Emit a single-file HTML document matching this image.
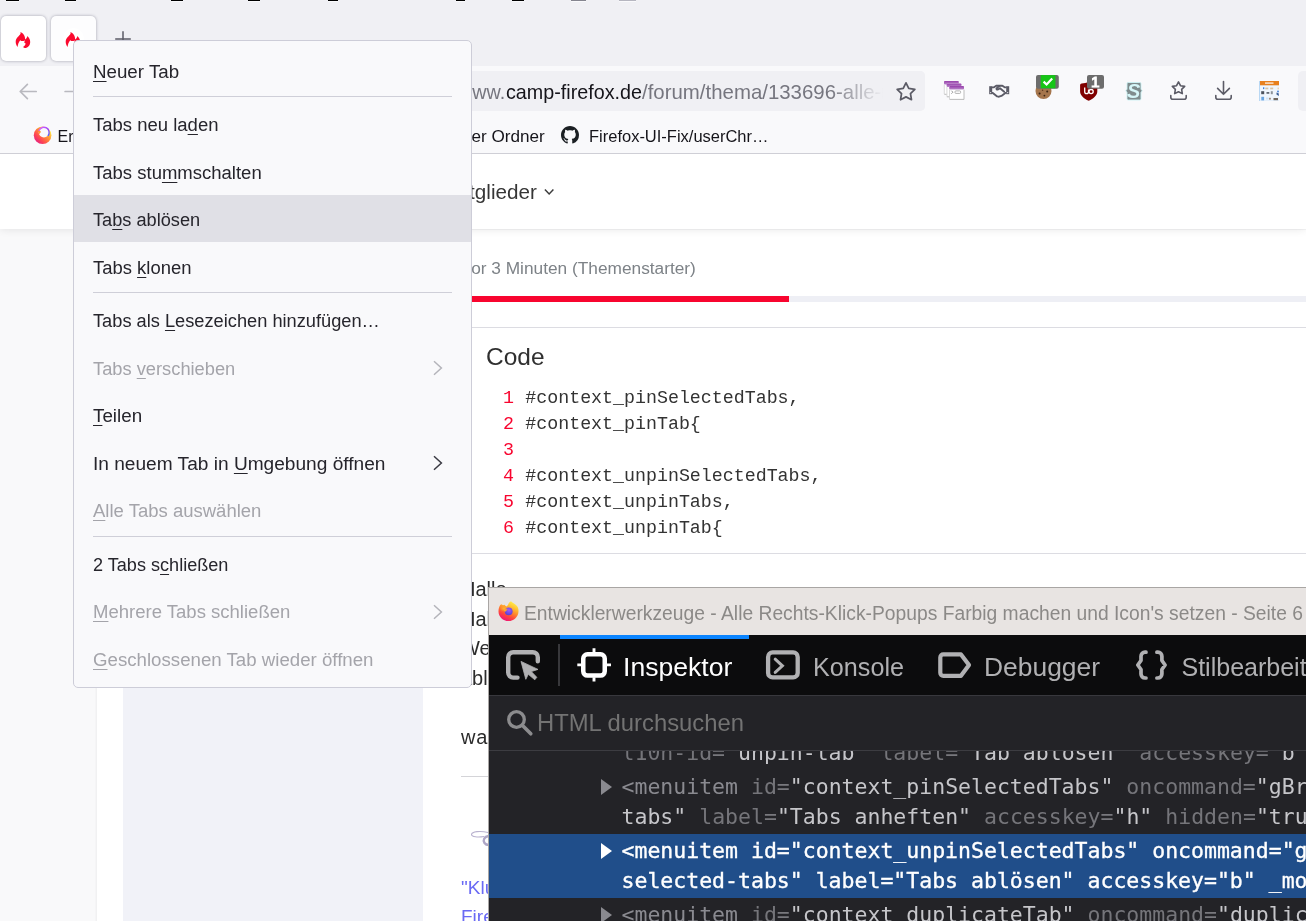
<!DOCTYPE html>
<html lang="de">
<head>
<meta charset="utf-8">
<title>Alle Rechts-Klick-Popups Farbig machen und Icon's setzen - Seite 6</title>
<style>
*{box-sizing:border-box;margin:0;padding:0}
html,body{width:1306px;height:921px;overflow:hidden;background:#f9f9fa}
body{position:relative;font-family:"Liberation Sans",sans-serif;color:#15141a}
.abs,.t,i.dash{position:absolute}
.t{line-height:0;white-space:nowrap;display:block;transform-origin:0 50%}
.ui{font-family:"Liberation Sans",sans-serif;margin-top:-.3465em}
.dv{font-family:"DejaVu Sans","Liberation Sans",sans-serif;margin-top:-.346em}
.mono{font-family:"Liberation Mono",monospace;margin-top:-.2665em}
.dm{font-family:"DejaVu Sans Mono","Liberation Mono",monospace;margin-top:-.346em}
u{text-decoration:underline;text-decoration-thickness:1px;text-underline-offset:2.600px}
svg{display:block;overflow:visible}

/* ---------- browser chrome ---------- */
#chrome{position:absolute;left:0;top:0;width:1306px;height:154px;background:#f9f9fb;border-bottom:1px solid #cfcfd6}
#tabbar{position:absolute;left:0;top:0;width:1306px;height:66px;background:#f0f0f4}
i.dash{top:0;height:2px;border-bottom:1px solid #fafafc}
.tab{position:absolute;top:16px;width:45px;height:45px;border-radius:5px;background:#fff;box-shadow:0 0 3px rgba(50,50,75,.42)}
.tab.sel{background:#fdfdfe}
.tab.sel i{position:absolute;left:12px;top:12px;width:21px;height:21px;border-radius:50%;background:#fff}
#urlbar{position:absolute;left:300px;top:71px;width:625px;height:40px;border-radius:5px;background:#f0f0f4;overflow:hidden}
#urlfade{position:absolute;left:530px;top:0;width:95px;height:40px;background:linear-gradient(90deg,rgba(240,240,244,0),#f0f0f4 56%)}
#searchbar{position:absolute;left:1298px;top:71px;width:30px;height:40px;border-radius:5px;background:#f0f0f4}

/* ---------- page ---------- */
#page{position:absolute;left:0;top:154px;width:1306px;height:767px;background:#f9f9fa;overflow:hidden}
#pagehead{position:absolute;left:0;top:0;width:1306px;height:75px;background:#fff;box-shadow:0 1px 8px rgba(0,0,0,.085)}
#content{position:absolute;left:97px;top:76px;width:1300px;height:800px;background:#fff;box-shadow:-1px 0 2px rgba(0,0,0,.05)}
#sidebar{position:absolute;left:26px;top:40px;width:300px;height:700px;background:#f1f2f8}

#codebox{position:absolute;left:465px;top:173px;width:900px;height:227px;border:1px solid #dcdce2;background:#fff}
#code{list-style:none;position:absolute;left:8px;top:57.200px;font-family:"Liberation Mono",monospace;font-size:18.290px;line-height:26.050px;color:#333}
#code li{white-space:pre;height:26.050px;padding-left:51.300px;position:relative}
#code li span{position:absolute;left:29px;color:#f8052f}
#post{position:absolute;left:461px;top:420.800px;font-family:"Liberation Sans",sans-serif;font-size:20px;line-height:29.700px;color:#2c2c2c;white-space:nowrap}
/* ---------- devtools ---------- */
#devtools{position:absolute;left:488px;top:587px;width:900px;height:400px;background:#232327;border-left:1px solid #a9a6a4;border-top:1px solid #a9a6a4;overflow:hidden}

#dt-title{position:absolute;left:0;top:0;width:900px;height:47px;background:#e8e4e2}
#dt-tabs{position:absolute;left:0;top:47px;width:900px;height:61px;background:#0c0c0d;border-bottom:1px solid #38383d}
#dt-active{position:absolute;left:71px;top:0;width:189px;height:4px;background:#0a84ff}
#dt-sep{position:absolute;left:69.200px;top:9px;width:2px;height:42px;background:#38383b}
#dt-search{z-index:1;position:absolute;left:0;top:108px;width:900px;height:55px;background:#232327;border-bottom:1px solid #3c3c41}
#dt-markup{position:absolute;left:0;top:162px;width:900px;height:300px;background:#232327;overflow:hidden;font-family:"DejaVu Sans Mono","Liberation Mono",monospace;font-size:21.500px;color:#78787d}
.row{position:absolute;left:0;width:900px;height:64px;padding-top:2px}
.row .ln{display:block;height:30px;line-height:30px;white-space:pre;padding-left:132.500px}
.tg{color:#8a8a90}.an{color:#75757a}.av{color:#c6c6ca}
.selrow{background:#204e8a;color:#fff;-webkit-text-stroke:.35px #fff;height:63.500px}
.tw{position:absolute;left:112px;top:9px;border-left:11.500px solid #8a8a90;border-top:8.500px solid transparent;border-bottom:8.500px solid transparent}
.selrow .tw{border-left-color:#fff}
/* ---------- context menu ---------- */
#menu{position:absolute;left:73px;top:40px;width:399px;height:648px;background:#f9f9fb;border:1px solid #cdcdd8;border-radius:5px;overflow:hidden}
.mi{font-size:18px;color:#26252c}
.mi.dis{color:#a4a4aa}
.msep{position:absolute;left:19px;width:359px;height:1px;background:#cfcfd8}
.mhl{position:absolute;left:0;width:397px;height:47px;background:#e0e0e6}
#chrome,#page,#devtools,#menu{will-change:transform}
</style>
</head>
<body>
<div id="chrome">
 <div id="tabbar">
  <i class="dash" style="left:6px;width:13px;background:#000"></i><i class="dash" style="left:65px;width:11px;background:#000"></i><i class="dash" style="left:171px;width:12px;background:#000"></i><i class="dash" style="left:248px;width:12px;background:#000"></i><i class="dash" style="left:328px;width:10px;background:#000"></i><i class="dash" style="left:456px;width:9px;background:#000"></i><i class="dash" style="left:512px;width:12px;background:#000"></i><i class="dash" style="left:571px;width:15px;background:#85858f"></i><i class="dash" style="left:619px;width:17px;background:#b6b6c0"></i>
  <div class="tab" style="left:1px"></div>
  <div class="tab sel" style="left:51px"><i></i></div>
  <svg class="abs" style="left:8px;top:24px" width="32" height="32" viewBox="0 0 32 32"><path d="M12.3 8C14 8.3 17 11 17.1 14.6L17.2 15.6C18.5 14.5 19.3 13.5 19.3 12.1C21 13.5 22.3 15.8 22.2 18C22.1 21.5 19.8 24 17 24C16.2 24 15.6 23.6 15.1 23C16.2 22.3 17.6 21 17.6 19.6L16.2 18.4C16.6 17.6 16.8 16.8 16.6 16.2C15.5 17.4 13.4 17.4 12.2 16.2C10.8 17.8 9.8 20.5 9.6 23C8.3 21.5 7.6 19.5 7.7 17.6C7.8 14 11.5 12 12.6 9.6C12.8 9 12.6 8.4 12.3 8Z" fill="#fb0a2f"/></svg>
  <svg class="abs" style="left:58px;top:24px" width="32" height="32" viewBox="0 0 32 32"><path d="M12.3 8C14 8.3 17 11 17.1 14.6L17.2 15.6C18.5 14.5 19.3 13.5 19.3 12.1C21 13.5 22.3 15.8 22.2 18C22.1 21.5 19.8 24 17 24C16.2 24 15.6 23.6 15.1 23C16.2 22.3 17.6 21 17.6 19.6L16.2 18.4C16.6 17.6 16.8 16.8 16.6 16.2C15.5 17.4 13.4 17.4 12.2 16.2C10.8 17.8 9.8 20.5 9.6 23C8.3 21.5 7.6 19.5 7.7 17.6C7.8 14 11.5 12 12.6 9.6C12.8 9 12.6 8.4 12.3 8Z" fill="#fb0a2f"/></svg>
  <svg class="abs" style="left:114px;top:30px" width="18" height="18" viewBox="0 0 18 18"><path d="M9 1.2V16.8M1.2 9H16.8" stroke="#5b5b66" stroke-width="1.5" fill="none"/></svg>
 </div>
 <div id="navbar">
  <svg class="abs" style="left:17px;top:80px" width="22" height="22" viewBox="0 0 22 22"><path d="M19.200 11.500H3.300M10.400 4.400L3.200 11.500L10.400 18.600" stroke="#b9b9bf" stroke-width="1.7" fill="none" stroke-linejoin="round" stroke-linecap="round"/></svg>
  <svg class="abs" style="left:62px;top:80px" width="22" height="22" viewBox="0 0 22 22"><path d="M3.100 11.500H19M11.800 4.400L19 11.500L11.800 18.600" stroke="#b9b9bf" stroke-width="1.7" fill="none" stroke-linejoin="round" stroke-linecap="round"/></svg>
  <div id="urlbar">
   <span id="u1" class="t ui" style="right:419.5px;top:28.500px;font-size:21px;color:#76767f;transform-origin:100% 50%;transform:scaleX(.94)">www.</span>
   <span id="u2" class="t ui" style="left:205.5px;top:28.500px;font-size:21px;color:#15141a;transform:scaleX(0.9397)">camp-firefox.de</span>
   <span id="u3" class="t ui" style="left:341.6px;top:28.500px;font-size:21px;color:#76767f;transform:scaleX(0.9719)">/forum/thema/133696-alle-</span>
   <span id="u4" class="t ui" style="left:581px;top:28.500px;font-size:21px;color:#76767f;transform:scaleX(.92)">rechts-klick-popups</span>
   <div id="urlfade"></div>
   <svg class="abs" style="left:594px;top:9px" width="24" height="24" viewBox="0 0 24 24"><path d="M12.00 2.90L14.76 8.40L20.84 9.33L16.47 13.65L17.47 19.72L12.00 16.90L6.53 19.72L7.53 13.65L3.16 9.33L9.24 8.40Z" fill="none" stroke="#5b5b66" stroke-width="1.75" stroke-linejoin="round"/></svg>
  </div>
  <div id="searchbar"></div>
  <div id="tbicons">
   <svg class="abs" style="left:943px;top:80px" width="22" height="20" viewBox="0 0 22 20">
    <defs><linearGradient id="pg" x1="0" y1="0" x2="0" y2="1"><stop offset="0" stop-color="#983fab"/><stop offset="1" stop-color="#b98acb"/></linearGradient></defs>
    <g><rect x="1" y="1" width="14.8" height="13" rx=".8" fill="#fff"/><path d="M1.3 14.3H15.8V4.6" stroke="#b4b4b4" stroke-width=".9" fill="none"/><path d="M1.3 4.6V14" stroke="#c9c9c9" stroke-width=".7"/><rect x="1" y="1" width="14.8" height="3.5" rx=".8" fill="url(#pg)"/></g>
    <g transform="translate(2.6 2.5)"><rect x="1" y="1" width="14.8" height="13" rx=".8" fill="#fff"/><path d="M1.3 14.3H15.8V4.6" stroke="#b4b4b4" stroke-width=".9" fill="none"/><path d="M1.3 4.6V14" stroke="#c9c9c9" stroke-width=".7"/><rect x="1" y="1" width="14.8" height="3.5" rx=".8" fill="url(#pg)"/></g><g transform="translate(5.2 5.1)"><rect x="1" y="1" width="14.8" height="13" rx=".8" fill="#fff"/><path d="M1.3 14.3H15.8V4.6" stroke="#b4b4b4" stroke-width=".9" fill="none"/><path d="M1.3 4.6V14" stroke="#c9c9c9" stroke-width=".7"/><rect x="1" y="1" width="14.8" height="3.5" rx=".8" fill="url(#pg)"/></g>
    <path d="M8.4 10.7l1.5 1.5-1.5 1.5" stroke="#9a9a9a" stroke-width="1" fill="none"/><rect x="12" y="10.9" width="5.6" height="2.5" rx=".9" fill="none" stroke="#aaa" stroke-width=".9"/>
   </svg>
   <svg class="abs" style="left:989px;top:84px" width="21" height="14" viewBox="0 0 21 14">
    <rect x=".2" y="2.200" width="3" height="8" fill="#5b5b66"/><rect x="17.200" y="2.200" width="3" height="8" fill="#5b5b66"/><circle cx="1.700" cy="8.600" r=".6" fill="#f9f9fb"/><circle cx="18.700" cy="8.600" r=".6" fill="#f9f9fb"/>
    <path d="M2.8 3.4L5 3.2 7.2 1.7H13.4L15.6 3.2 17.6 3.4M2.8 8.9H3.8L8.2 12.4 10 12.7 12.4 11.9 16.4 8.9H17.6" stroke="#5b5b66" stroke-width="1.900" fill="none" stroke-linejoin="round"/>
    <path d="M10.6 1.9L7.6 4.2C7 4.9 7.8 6 9 5.5L11 4.2 15.2 7.8" stroke="#5b5b66" stroke-width="1.800" fill="none" stroke-linejoin="round" stroke-linecap="round"/>
   </svg>
   <!-- cookie + badge -->
   <svg class="abs" style="left:1034px;top:74px" width="26" height="26" viewBox="0 0 26 26">
    <circle cx="9.5" cy="17" r="8" fill="#a5754c"/><circle cx="5.6" cy="19.6" r="1" fill="#3a2414"/><circle cx="10.4" cy="21.6" r=".9" fill="#3a2414"/><circle cx="13.2" cy="17.6" r="1" fill="#3a2414"/><circle cx="8.6" cy="16.2" r=".7" fill="#5c3a20"/>
    <rect x="2" y="1.1" width="22.8" height="13.7" rx="2" fill="#6d6d6d"/><rect x="6.7" y="1.1" width="14.7" height="13.2" fill="#16c516"/>
    <path d="M9.6 7.6l3 2.9 5.6-6" stroke="#fff" stroke-width="2.2" fill="none"/>
   </svg>
   <!-- uBlock + badge -->
   <svg class="abs" style="left:1079px;top:74px" width="26" height="28" viewBox="0 0 26 28">
    <path d="M2.600 9.400C5 9.400 7.600 9 9.700 8.100 11.800 9 14.400 9.400 16.800 9.400Q18.300 9.400 18.300 10.900V17.500C18.300 21.500 14.500 24.600 9.700 26.800 4.900 24.600 1.100 21.500 1.100 17.500V10.900Q1.100 9.400 2.600 9.400Z" fill="#800000"/>
    <path d="M5.700 13.600V17.700a1.900 1.900 0 0 0 3.800 0V15.600" stroke="#fff" stroke-width="1.300" fill="none"/><circle cx="12.100" cy="17.600" r="2.100" stroke="#fff" stroke-width="1.300" fill="none"/>
    <rect x="8" y="1.100" width="17" height="13.700" rx="2" fill="#6d6d6d"/>
   </svg>
   <span id="ub1" class="t ui" style="left:1091px;top:87.400px;font-size:15.500px;color:#fff;-webkit-text-stroke:1px #fff">1</span>
   <!-- Stylus -->
   <svg class="abs" style="left:1125px;top:81px" width="18" height="20" viewBox="0 0 18 20">
    <path d="M3.200 1.500H14.800Q16 1.500 16 2.700V8.200L17.200 9.800 16 11.400V17.800Q16 19 14.800 19H3.200Q2 19 2 17.800V11.400L.8 9.800 2 8.200V2.700Q2 1.500 3.200 1.500Z" fill="#7f8c8d" stroke="#cdf3f5" stroke-width=".9"/>
   </svg>
   <span id="sty" class="t ui" style="left:1127.400px;top:97.800px;font-size:19.500px;font-weight:bold;font-style:italic;color:#d6f6f8;transform:scaleX(1.02)">S</span>
   <!-- bookmarks menu -->
   <svg class="abs" style="left:1168px;top:79px" width="22" height="22" viewBox="0 0 22 22"><path d="M10.50 2.90L12.44 6.73L16.68 7.39L13.64 10.42L14.32 14.66L10.50 12.70L6.68 14.66L7.36 10.42L4.32 7.39L8.56 6.73Z" fill="none" stroke="#5b5b66" stroke-width="1.600" stroke-linejoin="round"/><path d="M2.800 16.500v1.700a2 2 0 0 0 2 2h11.400a2 2 0 0 0 2-2v-1.700" fill="none" stroke="#5b5b66" stroke-width="1.600" stroke-linecap="round"/></svg>
   <!-- downloads -->
   <svg class="abs" style="left:1213px;top:79px" width="22" height="22" viewBox="0 0 22 22"><path d="M10.500 2.600V15.200M4.600 9.400L10.500 15.300 16.400 9.400" fill="none" stroke="#5b5b66" stroke-width="1.600" stroke-linecap="round" stroke-linejoin="round"/><path d="M2.800 16.500v1.700a2 2 0 0 0 2 2h11.400a2 2 0 0 0 2-2v-1.700" fill="none" stroke="#5b5b66" stroke-width="1.600" stroke-linecap="round"/></svg>
   <!-- calendar -->
   <svg class="abs" style="left:1259px;top:81px" width="20" height="20" viewBox="0 0 20 20">
    <rect x="0" y="0" width="20" height="20" fill="#dcecfb"/><rect x="1.200" y="4.200" width="18.800" height="15.200" fill="#eff6fd"/><rect x="1" y="0" width="19" height="4.300" fill="#e8801c"/><rect x="6" y="1.300" width="8.500" height="1.600" fill="#f9dcc0"/><rect x="0" y="0" width="1" height="20" fill="#b9d8f4"/>
    <g fill="#d9c3a4"><rect x="6.300" y="6.600" width="3" height="1.700"/><rect x="11.200" y="6.600" width="3" height="1.700"/><rect x="18.500" y="6.600" width="1.500" height="1.700" fill="#ecd3b4"/></g>
    <g fill="#4a515c"><rect x="2.200" y="10.200" width="3" height="3"/><rect x="7.500" y="11" width="2.800" height="1.800" fill="#636a74"/><rect x="11.800" y="10.200" width="2" height="3" fill="#8d949c"/><rect x="14.500" y="17" width="4.500" height="2.200" fill="#6f675e"/></g>
    <g fill="#3f7fd8"><rect x="4" y="6.300" width="1.300" height="1.800"/><circle cx="19" cy="10.500" r=".9"/><path d="M17.500 11.500L19.800 12.500V15L17.500 13.500Z" fill="#3c5f96"/><rect x="2.300" y="15.800" width="2.800" height="3.600" fill="#6aa6e2"/></g>
    <rect x="7" y="16.500" width="2.500" height="2" fill="#cfe4f8"/><rect x="10.200" y="16.800" width="1.500" height="1.800" fill="#8a7460"/>
   </svg>
  </div>
 </div>
 <div id="bookmarks">
  <svg class="abs" style="left:32.500px;top:125.200px" width="19" height="19" viewBox="0 0 19 19">
   <defs><linearGradient id="fxg" x1=".9" y1=".25" x2=".2" y2=".95"><stop offset="0" stop-color="#ffe850"/><stop offset=".3" stop-color="#ff9d30"/><stop offset=".7" stop-color="#ff4a50"/><stop offset="1" stop-color="#e62080"/></linearGradient>
   <linearGradient id="fxp" x1="0" y1="0" x2="1" y2="1"><stop offset="0" stop-color="#e070ff"/><stop offset=".55" stop-color="#9a3dff"/><stop offset="1" stop-color="#4f6bff"/></linearGradient></defs>
   <circle cx="9.600" cy="10.300" r="8.800" fill="url(#fxg)"/>
   <circle cx="10.9" cy="7.5" r="5.1" fill="#f9f9fb"/>
   <path d="M6.300 5.200C7.200 5.600 7.800 6.300 8 7.200 7.200 7.600 6.600 8.400 6.500 9.400 5.600 8.200 5.500 6.400 6.300 5.200Z" fill="#ff9a30"/>
   <path d="M6.14 5.28A5.25 5.25 0 1 1 15.20 10.51" fill="none" stroke="url(#fxp)" stroke-width="1.350" stroke-linecap="round"/>
  </svg>
  <svg class="abs" style="left:561px;top:126px" width="18" height="18" viewBox="0 0 16 16"><path fill="#1b1f23" d="M8 0C3.580 0 0 3.580 0 8c0 3.540 2.290 6.530 5.470 7.590.4.070.55-.17.550-.38 0-.19-.01-.82-.01-1.490-2.010.37-2.530-.49-2.690-.94-.09-.23-.48-.94-.82-1.130-.28-.15-.68-.52-.01-.53.630-.01 1.080.58 1.230.82.720 1.210 1.870.87 2.330.66.070-.52.280-.87.510-1.070-1.780-.2-3.640-.89-3.640-3.950 0-.87.310-1.590.82-2.150-.08-.2-.36-1.020.08-2.120 0 0 .67-.21 2.200.82.640-.18 1.320-.27 2-.27s1.360.09 2 .27c1.530-1.040 2.200-.82 2.200-.82.440 1.100.16 1.920.08 2.120.51.560.82 1.270.82 2.150 0 3.070-1.870 3.750-3.650 3.950.29.250.54.730.54 1.480 0 1.070-.01 1.930-.01 2.200 0 .21.150.46.550.38A8.013 8.013 0 0 0 16 8c0-4.420-3.580-8-8-8z"/></svg>
  <span id="b1" class="t ui" style="left:57.5px;top:142.800px;font-size:16px">Erste Schritte</span>
  <span id="b2" class="t ui" style="right:760.800px;top:142.800px;font-size:16px;transform-origin:100% 50%;transform:scaleX(1.07)">Neuer Ordner</span>
  <span id="b3" class="t ui" style="left:588.5px;top:142.800px;font-size:16px;transform:scaleX(1.0302)">Firefox-UI-Fix/userChr…</span>
 </div>
</div>
<div id="page">
 <div id="content">
  <div id="sidebar"></div>
 </div>
 <div id="pagehead">
  <span id="p1" class="t ui" style="right:769px;top:45px;font-size:20.500px;color:#363636;transform-origin:100% 50%;transform:scaleX(1.008)">Mitglieder</span>
  <svg class="abs" style="left:543px;top:33px" width="12" height="10" viewBox="0 0 12 10"><path d="M1.900 2.600L6.150 7 10.400 2.600" fill="none" stroke="#3c3c3c" stroke-width="1.500"/></svg>
 </div>
 <span id="p2" class="t ui" style="right:610.500px;top:120.500px;font-size:16px;color:#7d8287;transform-origin:100% 50%;transform:scaleX(1.08)">Vor 3 Minuten (Themenstarter)</span>
 <div id="barred" class="abs" style="left:440px;top:142px;width:349px;height:6px;background:#f8052f"></div>
 <div id="bargray" class="abs" style="left:789px;top:142px;width:517px;height:6px;background:#eeeff5"></div>
 <div id="codebox">
  <span id="p3" class="t ui" style="left:20px;top:37.700px;font-size:24px;color:#2f2f2f;transform:scaleX(1.02)">Code</span>
  <ol id="code">
   <li><span>1</span>#context_pinSelectedTabs,</li>
   <li><span>2</span>#context_pinTab{</li>
   <li><span>3</span></li>
   <li><span>4</span>#context_unpinSelectedTabs,</li>
   <li><span>5</span>#context_unpinTabs,</li>
   <li><span>6</span>#context_unpinTab{</li>
  </ol>
 </div>
 <div id="post">
  <p>Hallo,</p><p>Hallo zusammen,</p><p>Wenn ich mehrere Tabs markiere, dann</p><p>ablösen funktioniert nicht</p><p>&nbsp;</p><p style="letter-spacing:.9px">was mache ich falsch?</p>
 </div>
 <div id="sigline" class="abs" style="left:461px;top:622px;width:800px;height:1px;background:#d4d4d8"></div>
 <svg class="abs" style="left:470px;top:676px" width="40" height="18" viewBox="0 0 40 18"><path d="M18 2.500C10 .5 2 1.500 1.500 4.500 1.500 7 8 7.500 14 6.500" fill="none" stroke="#b9b2cf" stroke-width="1.100" stroke-linecap="round"/><path d="M18.500 6C14.500 6.500 12.500 10 14.500 13 15.500 14.500 17 15 19 15" fill="none" stroke="#aea6c6" stroke-width="2.300" stroke-linecap="round"/></svg>
 <span id="p4" class="t ui" style="left:461px;top:740.300px;font-size:19px;color:#6a6af4">"Klug ist, wer nur die Hälfte von dem glaubt, was er hört</span>
 <span id="p5" class="t ui" style="left:461px;top:769.800px;font-size:19px;color:#6a6af4">Firefox 91 • Windows 10</span>
</div>
<div id="devtools">
 <div id="dt-title">
  <svg class="abs" style="left:8.500px;top:13px" width="21" height="21" viewBox="0 0 21 21">
   <defs><linearGradient id="ffo" x1=".78" y1=".05" x2=".3" y2="1"><stop offset="0" stop-color="#fff24e"/><stop offset=".25" stop-color="#ffc233"/><stop offset=".48" stop-color="#ff8a2c"/><stop offset=".72" stop-color="#ff453d"/><stop offset="1" stop-color="#ee0f7c"/></linearGradient>
   <radialGradient id="ffg" cx=".55" cy=".35" r=".7"><stop offset="0" stop-color="#a259ff"/><stop offset="1" stop-color="#4f3fd0"/></radialGradient>
   <radialGradient id="ffh" cx=".5" cy=".5" r=".5"><stop offset="0" stop-color="#ffb830"/><stop offset="1" stop-color="#ffa02c" stop-opacity="0"/></radialGradient></defs>
   <path d="M13 .2C14.500 2 17.500 3 19 5 20.300 6.800 20.600 8.600 20.500 10.400 20.300 15.600 16 20 10.500 20 5 20 .5 15.600 .5 10.400 .5 8 1 5.800 2.200 4L3.500 3.200 5 4.200 6.500 3.800C7 4.600 7.800 5.200 8.600 5.400 9.600 4.600 10.400 3.600 10.600 2.600 11 1.600 11.800 .8 13 .2Z" fill="url(#ffo)"/>
   <circle cx="10.700" cy="10.300" r="3.900" fill="url(#ffg)"/>
   <ellipse cx="6" cy="7.600" rx="4.200" ry="3.200" fill="url(#ffh)"/>
   <path d="M5.500 8.800C6.800 8.200 8.200 8.200 9.600 8.800 8.600 9.300 7.600 10 7.200 11 6.400 10.400 5.800 9.600 5.500 8.800Z" fill="#ffa62e"/>
  </svg>
  <span id="d0" class="t ui" style="left:35px;top:32.300px;font-size:20px;color:#8b8987;transform:scaleX(0.9633)">Entwicklerwerkzeuge - Alle Rechts-Klick-Popups Farbig machen und Icon's setzen - Seite 6</span>
 </div>
 <div id="dt-tabs">
  <i id="dt-active"></i><i id="dt-sep"></i>
  <!-- element picker -->
  <svg class="abs" style="left:16px;top:14px" width="38" height="34" viewBox="0 0 38 34"><path d="M32.800 12.200V8.200a5 5 0 0 0-5-5H8.200a5 5 0 0 0-5 5V23.600a5 5 0 0 0 5 5H12.500" fill="none" stroke="#b1b1b3" stroke-width="4.400" stroke-linecap="round"/><path d="M16 12.400L33 20.400 26.300 22.600 31.800 28.300 29.800 30.800 23.300 25.300 20.800 30.300Z" fill="#b1b1b3" stroke="#b1b1b3" stroke-width=".8" stroke-linejoin="round"/></svg>
  <!-- inspector -->
  <svg class="abs" style="left:88px;top:13px" width="35" height="34" viewBox="0 0 35 34"><rect x="6.250" y="6.250" width="21.500" height="21.300" rx="4.200" fill="none" stroke="#fff" stroke-width="4.500"/><path d="M17 .2V4.500M17 29.300V33.600M.3 16.900H4.500M29.500 16.900H34" stroke="#fff" stroke-width="2.900"/></svg>
  <span id="d1" class="t ui" style="left:134.300px;top:41px;font-size:25px;color:#fff;transform:scaleX(1.0628)">Inspektor</span>
  <!-- console -->
  <svg class="abs" style="left:277px;top:15px" width="36" height="30" viewBox="0 0 36 30"><rect x="2.100" y="2.400" width="29.600" height="25" rx="4.500" fill="none" stroke="#b1b1b3" stroke-width="4.300"/><path d="M9.200 9.200L16.400 15.800 9.200 22.400" fill="none" stroke="#b1b1b3" stroke-width="3" stroke-linecap="round"/></svg>
  <span id="d2" class="t ui" style="left:324px;top:41px;font-size:25px;color:#b1b1b3;transform:scaleX(1.0071)">Konsole</span>
  <!-- debugger -->
  <svg class="abs" style="left:449px;top:16px" width="36" height="28" viewBox="0 0 36 28"><path d="M5.300 3.400H23L31 14.100 23 24.800H5.300a3 3 0 0 1-3-3V6.400a3 3 0 0 1 3-3Z" fill="none" stroke="#b1b1b3" stroke-width="4.200" stroke-linejoin="round"/></svg>
  <span id="d3" class="t ui" style="left:494.800px;top:41px;font-size:25px;color:#b1b1b3;transform:scaleX(1.0563)">Debugger</span>
  <!-- style editor -->
  <svg class="abs" style="left:645px;top:13px" width="36" height="34" viewBox="0 0 36 34"><path d="M12 4.200H11a4 4 0 0 0-4 4V12.500L3.800 17 7 21.500V26a4 4 0 0 0 4 4H12M22.900 4.200H23.900a4 4 0 0 1 4 4V12.500L31.100 17 27.900 21.500V26a4 4 0 0 1-4 4H22.900" fill="none" stroke="#b1b1b3" stroke-width="3.700" stroke-linecap="round" stroke-linejoin="round"/></svg>
  <span id="d4" class="t ui" style="left:692.500px;top:41px;font-size:25px;color:#b1b1b3;transform:scaleX(1.0)">Stilbearbeitung</span>
 </div>
 <div id="dt-search">
  <svg class="abs" style="left:15.500px;top:12px" width="30" height="30" viewBox="0 0 30 30"><circle cx="11.500" cy="11.500" r="7.800" fill="none" stroke="#8c8c8e" stroke-width="3.300"/><path d="M17.300 17.300L25.800 25.800" stroke="#8c8c8e" stroke-width="3.600" stroke-linecap="round"/></svg>
  <span id="d5" class="t ui" style="left:48.200px;top:35.800px;font-size:24.500px;color:#737373;transform:scaleX(0.9723)">HTML durchsuchen</span>
 </div>
 <div id="dt-markup">
  <div class="row" style="top:-44px"><span class="ln">&nbsp;</span><span class="ln"><span class="an">l10n-id</span>=<span class="av">"unpin-tab"</span> <span class="an">label</span>=<span class="av">"Tab ablösen"</span> <span class="an">accesskey</span>=<span class="av">"b"</span> <span class="an">hidden</span>=<span class="av">"true"</span></span></div>
  <div class="row" style="top:20px"><i class="tw"></i><span class="ln"><span class="tg">&lt;menuitem</span> <span class="an">id</span>=<span class="av">"context_pinSelectedTabs"</span> <span class="an">oncommand</span>=<span class="av">"gBrowser.pinMultiSelectedTabs();"</span></span><span class="ln"><span class="av">tabs"</span> <span class="an">label</span>=<span class="av">"Tabs anheften"</span> <span class="an">accesskey</span>=<span class="av">"h"</span> <span class="an">hidden</span>=<span class="av">"true"</span><span class="tg">&gt;</span></span></div>
  <div class="row selrow" style="top:84px"><i class="tw"></i><span class="ln">&lt;menuitem id="context_unpinSelectedTabs" oncommand="gBrowser.unpinMultiSelectedTabs();"</span><span class="ln">selected-tabs" label="Tabs ablösen" accesskey="b" _moz-menuactive="true"&gt;</span></div>
  <div class="row" style="top:147.500px"><i class="tw"></i><span class="ln"><span class="tg">&lt;menuitem</span> <span class="an">id</span>=<span class="av">"context_duplicateTab"</span> <span class="an">oncommand</span>=<span class="av">"duplicateTabIn(TabContextMenu.contextTab);"</span></span></div>
 </div>
</div>
<div id="menu">
 <span id="m1" class="t ui mi" style="left:18.5px;top:37.4px;transform:scaleX(1.0407)"><u>N</u>euer Tab</span>
 <i class="msep" style="top:54.8px"></i>
 <span id="m2" class="t ui mi" style="left:18.5px;top:90.4px;transform:scaleX(1.0276)">Tabs neu la<u>d</u>en</span>
 <span id="m3" class="t ui mi" style="left:18.5px;top:138.1px;transform:scaleX(1.0281)">Tabs stu<u>m</u>mschalten</span>
 <i class="mhl" style="top:154px"></i>
 <span id="m4" class="t ui mi" style="left:18.5px;top:185.6px;transform:scaleX(1.0104)">Ta<u>b</u>s ablösen</span>
 <span id="m5" class="t ui mi" style="left:18.5px;top:233.4px;transform:scaleX(1.0242)">Tabs <u>k</u>lonen</span>
 <i class="msep" style="top:250.9px"></i>
 <span id="m6" class="t ui mi" style="left:18.5px;top:286.1px;transform:scaleX(1.0127)">Tabs als <u>L</u>esezeichen hinzufügen…</span>
 <span id="m7" class="t ui mi dis" style="left:18.5px;top:334.3px;transform:scaleX(1.0157)">Tabs <u>v</u>erschieben</span>
 <svg class="abs" style="left:358px;top:318.1px" width="12" height="18" viewBox="0 0 12 18"><path d="M2 2.200L9.400 9 2 15.800" fill="none" stroke="#b4b4ba" stroke-width="1.500"/></svg>
 <span id="m8" class="t ui mi" style="left:18.5px;top:381.7px;transform:scaleX(1.0440)"><u>T</u>eilen</span>
 <span id="m9" class="t ui mi" style="left:18.5px;top:429.5px;transform:scaleX(1.0612)">In neuem Tab in <u>U</u>mgebung öffnen</span>
 <svg class="abs" style="left:358px;top:413.3px" width="12" height="18" viewBox="0 0 12 18"><path d="M2 2.200L9.400 9 2 15.800" fill="none" stroke="#3a3a42" stroke-width="1.500"/></svg>
 <span id="m10" class="t ui mi dis" style="left:18.5px;top:476.1px;transform:scaleX(1.0281)"><u>A</u>lle Tabs auswählen</span>
 <i class="msep" style="top:494.9px"></i>
 <span id="m11" class="t ui mi" style="left:18.5px;top:530.7px;transform:scaleX(1.0047)">2 Tabs s<u>c</u>hließen</span>
 <span id="m12" class="t ui mi dis" style="left:18.5px;top:577.3px;transform:scaleX(1.0289)"><u>M</u>ehrere Tabs schließen</span>
 <svg class="abs" style="left:358px;top:561.9px" width="12" height="18" viewBox="0 0 12 18"><path d="M2 2.200L9.400 9 2 15.800" fill="none" stroke="#b4b4ba" stroke-width="1.500"/></svg>
 <span id="m13" class="t ui mi dis" style="left:18.5px;top:625.5px;transform:scaleX(1.0368)"><u>G</u>eschlossenen Tab wieder öffnen</span>
</div>
</body>
</html>
